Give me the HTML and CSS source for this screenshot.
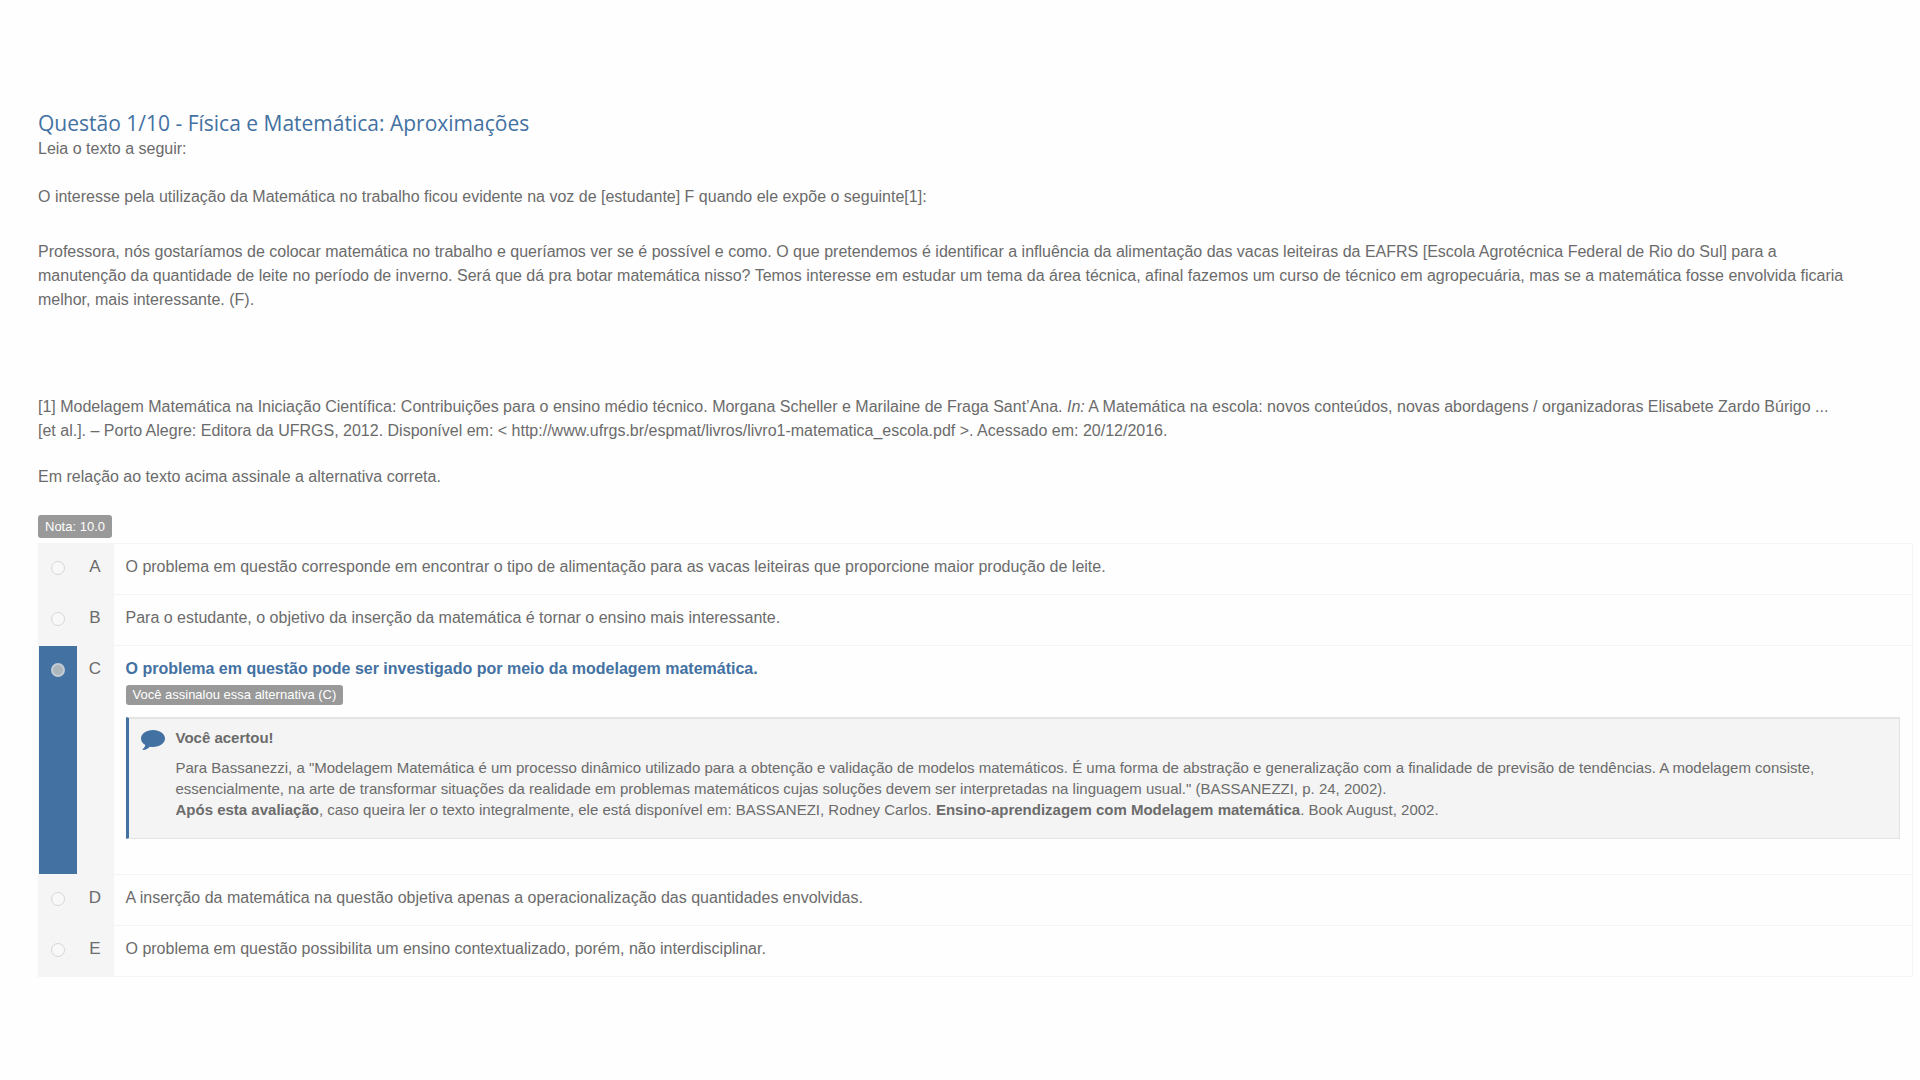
FILE: index.html
```html
<!DOCTYPE html>
<html lang="pt-BR">
<head>
<meta charset="utf-8">
<title>Questão 1/10</title>
<link rel="stylesheet" href="styles.css">
</head>
<body>
<main class="question">
  <h1 class="question-title">Questão 1/10 - Física e Matemática: Aproximações</h1>
  <div class="statement">
    <p>Leia o texto a seguir:</p>
    <p class="lead">O interesse pela utilização da Matemática no trabalho ficou evidente na voz de [estudante] F quando ele expõe o seguinte[1]:</p>
    <p class="quote">Professora, nós gostaríamos de colocar matemática no trabalho e queríamos ver se é possível e como. O que pretendemos é identificar a influência da alimentação das vacas leiteiras da EAFRS [Escola Agrotécnica Federal de Rio do Sul] para a<br>manutenção da quantidade de leite no período de inverno. Será que dá pra botar matemática nisso? Temos interesse em estudar um tema da área técnica, afinal fazemos um curso de técnico em agropecuária, mas se a matemática fosse envolvida ficaria<br>melhor, mais interessante. (F).</p>
    <p class="source">[1] Modelagem Matemática na Iniciação Científica: Contribuições para o ensino médio técnico. Morgana Scheller e Marilaine de Fraga Sant’Ana. <em>In:</em> A Matemática na escola: novos conteúdos, novas abordagens / organizadoras Elisabete Zardo Búrigo ...<br>[et al.]. – Porto Alegre: Editora da UFRGS, 2012. Disponível em: &lt; http://www.ufrgs.br/espmat/livros/livro1-matematica_escola.pdf &gt;. Acessado em: 20/12/2016.</p>
    <p class="prompt">Em relação ao texto acima assinale a alternativa correta.</p>
  </div>
  <div class="grade"><span class="badge badge-grade">Nota: 10.0</span></div>
  <table class="options">
    <tbody>
      <tr>
        <td class="pick"><input type="radio" name="answer" id="opt-a" disabled></td>
        <td class="letter">A</td>
        <td class="answer"><label for="opt-a">O problema em questão corresponde em encontrar o tipo de alimentação para as vacas leiteiras que proporcione maior produção de leite.</label></td>
      </tr>
      <tr>
        <td class="pick"><input type="radio" name="answer" id="opt-b" disabled></td>
        <td class="letter">B</td>
        <td class="answer"><label for="opt-b">Para o estudante, o objetivo da inserção da matemática é tornar o ensino mais interessante.</label></td>
      </tr>
      <tr class="chosen">
        <td class="pick"><input type="radio" name="answer" id="opt-c" checked disabled></td>
        <td class="letter">C</td>
        <td class="answer">
          <label for="opt-c">O problema em questão pode ser investigado por meio da modelagem matemática.</label>
          <div class="mark"><span class="badge">Você assinalou essa alternativa (C)</span></div>
          <div class="feedback">
            <svg class="bubble" viewBox="0 0 24 20" aria-hidden="true"><path d="M12 0C5.300 0 0 3.800 0 8.500c0 2.700 1.700 5 4.300 6.500-.3 1.600-1.200 3-2.600 4.200-.4.400-.1.800.4.800 2.700-.3 5-1.500 6.700-3.300 1 .2 2.100.3 3.200.3 6.700 0 12-3.800 12-8.500S18.700 0 12 0z"/></svg>
            <div>
              <strong class="feedback-title">Você acertou!</strong>
              <p>Para Bassanezzi, a "Modelagem Matemática é um processo dinâmico utilizado para a obtenção e validação de modelos matemáticos. É uma forma de abstração e generalização com a finalidade de previsão de tendências. A modelagem consiste, essencialmente, na arte de transformar situações da realidade em problemas matemáticos cujas soluções devem ser interpretadas na linguagem usual." (BASSANEZZI, p. 24, 2002).</p>
              <p><strong>Após esta avaliação</strong>, caso queira ler o texto integralmente, ele está disponível em: BASSANEZI, Rodney Carlos. <strong>Ensino-aprendizagem com Modelagem matemática</strong>. Book August, 2002.</p>
            </div>
          </div>
        </td>
      </tr>
      <tr>
        <td class="pick"><input type="radio" name="answer" id="opt-d" disabled></td>
        <td class="letter">D</td>
        <td class="answer"><label for="opt-d">A inserção da matemática na questão objetiva apenas a operacionalização das quantidades envolvidas.</label></td>
      </tr>
      <tr>
        <td class="pick"><input type="radio" name="answer" id="opt-e" disabled></td>
        <td class="letter">E</td>
        <td class="answer"><label for="opt-e">O problema em questão possibilita um ensino contextualizado, porém, não interdisciplinar.</label></td>
      </tr>
    </tbody>
  </table>
</main>
</body>
</html>
```
FILE: styles.css
```css
* { box-sizing: border-box; }
body {
  margin: 0;
  background: #fefefe;
  color: #6b6b6b;
  font-family: "Liberation Sans", Arial, sans-serif;
  font-size: 16px;
  line-height: 24px;
}
p { margin: 0; }
.question { padding: 109px 7px 104px 38px; }
.question-title {
  margin: 0;
  color: #4371a2;
  font: 400 21px/28px "Open Sans", sans-serif;
}
.statement { padding-right: 4px; }
.lead { margin-top: 24px; }
.quote { margin-top: 31px; }
.source { margin-top: 83px; }
.prompt { margin-top: 22px; }
.grade { display: flex; margin: 26px 0 5px; }
.badge {
  display: inline-block;
  padding: 0 7px;
  border-radius: 3px;
  background: #999;
  color: #fff;
  font-size: 13px;
  line-height: 20px;
}
.badge-grade { line-height: 23px; }
.options {
  width: 100%;
  border: 1px solid #f5f5f5;
  border-collapse: collapse;
}
.options td { padding: 11px 12px 15px; vertical-align: top; }
.options tr { border-top: 1px solid #f5f5f5; }
.options .pick,
.options .letter { padding-right: 0; padding-left: 0; background: #f5f5f5; text-align: center; }
.options .pick { width: 38px; }
.options .letter { width: 37px; font-size: 17px; }
.pick input {
  display: block;
  width: 14px;
  height: 14px;
  margin: 6px auto 0;
  border: 1px solid #d6d6d6;
  border-radius: 50%;
  appearance: none;
  background: #f8f8f8;
}
.chosen .pick { background: #4371a2; }
.chosen .pick input { border: 2px solid #c3ccd5; background: #adb5bd; }
.chosen label { color: #4371a2; font-weight: 700; }
.options .chosen .answer { padding-bottom: 35px; }
.mark { display: flex; margin-top: 4px; }
.feedback {
  display: flex;
  gap: 11px;
  margin-top: 12px;
  padding: 9px 64px 18px 12px;
  border: 1px solid #e3e3e3;
  border-left: 3px solid #4371a2;
  background: #f4f4f4;
  box-shadow: inset 0 1px 1px #e3e3e3;
  font-size: 15px;
  line-height: 21px;
}
.feedback-title { display: block; margin-bottom: 9px; }
.bubble { flex: none; width: 24px; height: 20px; margin-top: 3px; fill: #4371a2; }
```
